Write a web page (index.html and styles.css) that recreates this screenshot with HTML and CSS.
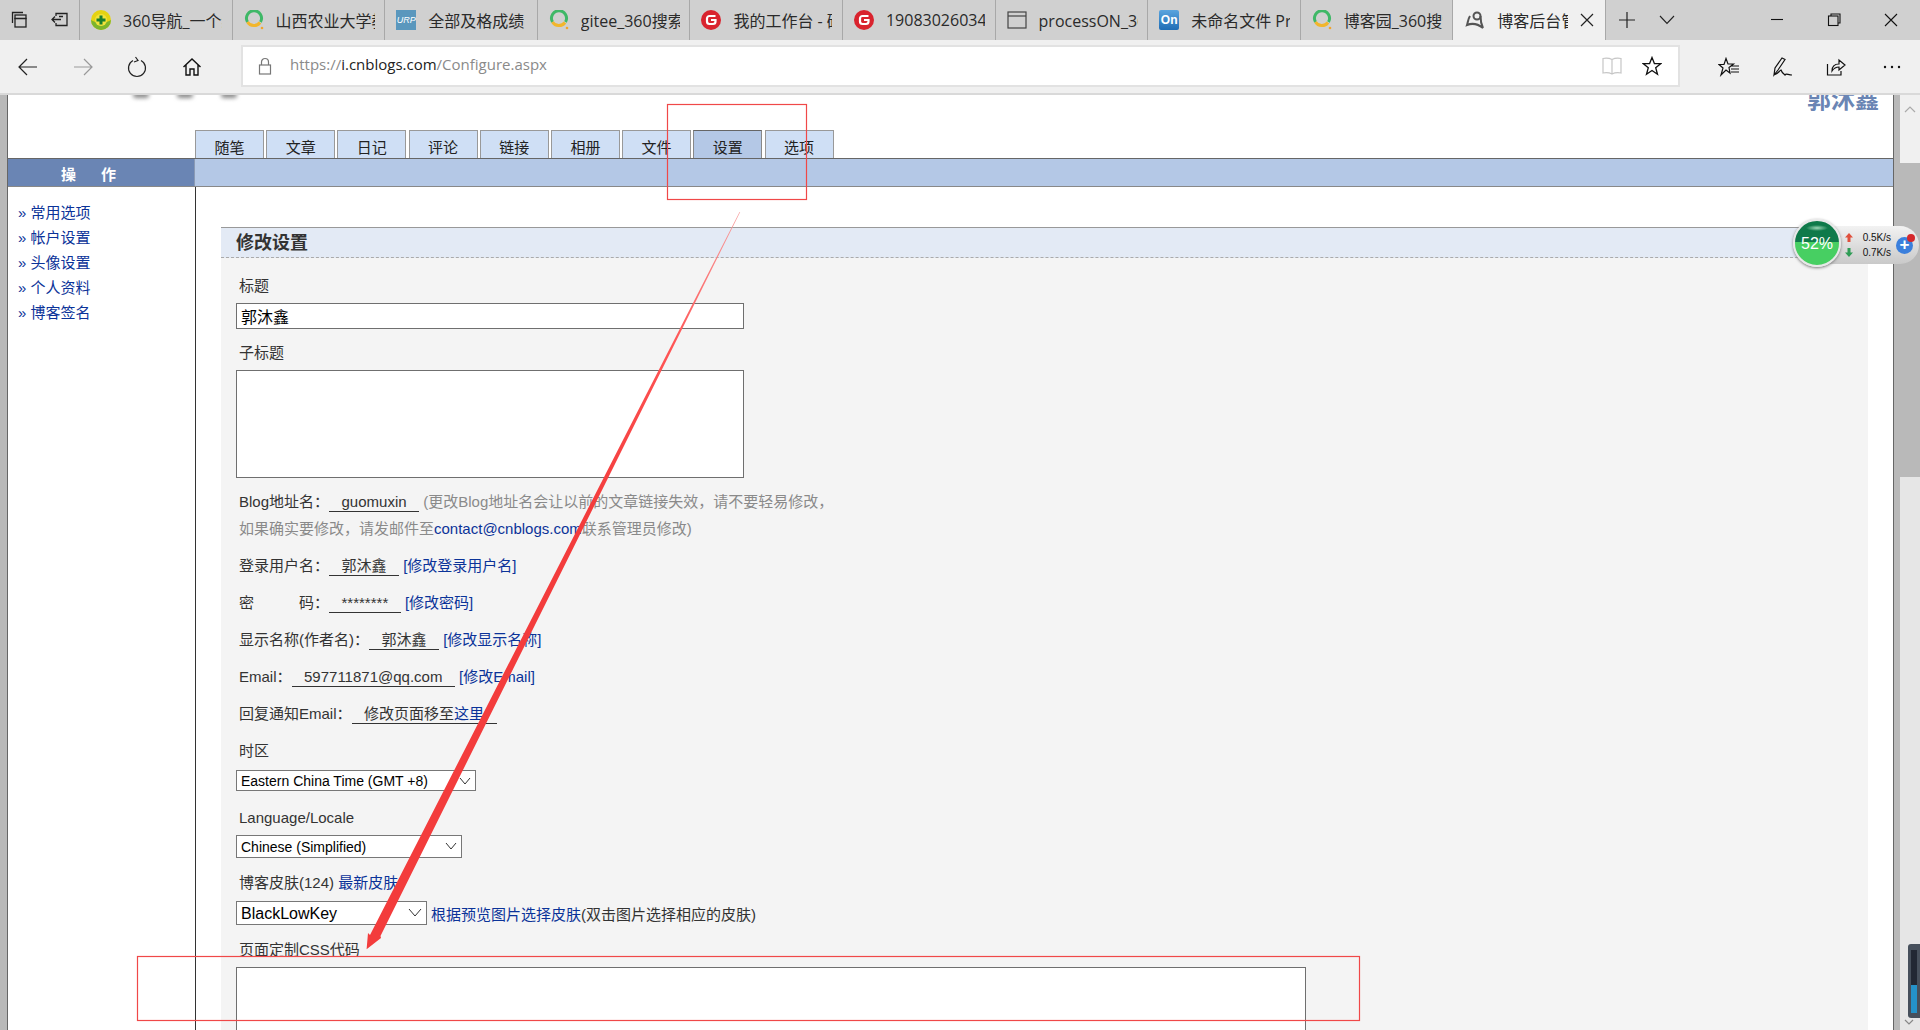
FILE: index.html
```html
<!DOCTYPE html>
<html lang="zh-CN">
<head>
<meta charset="UTF-8">
<title>博客后台管理</title>
<link rel="stylesheet" href="styles.css">
</head>
<body>
<svg class="defs" width="0" height="0">
  <symbol id="ico-search" viewBox="0 0 20 20">
    <path d="M3.5 12A7.5 7.5 0 1 1 16.5 12" fill="none" stroke="#3fb867" stroke-width="3"/>
    <path d="M3.5 12A7.5 7.5 0 0 0 16 12.5" fill="none" stroke="#f2b62c" stroke-width="3"/>
    <circle cx="18" cy="18" r="1.3" fill="#f2a52c"/>
  </symbol>
  <symbol id="ico-gitee" viewBox="0 0 20 20">
    <circle cx="10" cy="10" r="10" fill="#d9232e"/>
    <path d="M14.5 6H8.5A2.5 2.5 0 0 0 6 8.500V11.500A2.500 2.500 0 0 0 8.500 14H12A2.500 2.500 0 0 0 14.500 11.500V10H10" fill="none" stroke="#fff" stroke-width="2.200"/>
  </symbol>
</svg>

<div class="browser">
  <div class="tabstrip">
    <div class="strip-tools">
      <svg width="20" height="20" viewBox="0 0 20 20" fill="none" stroke="#222" stroke-width="1.300"><path d="M2.500 13V2.500H13"/><rect x="5" y="5" width="11" height="3.500"/><rect x="5" y="8.500" width="11" height="8.500"/></svg>
      <svg width="20" height="20" viewBox="0 0 20 20" fill="none" stroke="#222" stroke-width="1.300"><path d="M6 6V3.500H17V15.500H6V13"/><path d="M2 9.500H11M5 6.500L2 9.500L5 12.500M9 6.500H13"/></svg>
    </div>
    <div class="tab">
      <svg class="tab-ico" viewBox="0 0 20 20"><circle cx="10" cy="10" r="10" fill="#e5d312"/><path d="M0 10A10 10 0 0 0 20 10A12 6 0 0 1 0 10" fill="#7db52b"/><circle cx="10" cy="10" r="6" fill="#f3e33b"/><path d="M10 5.500V14.500M5.500 10H14.500" stroke="#1b7f2d" stroke-width="3"/></svg>
      <span class="tab-title">360导航_一个绿色安全的上网导航</span>
    </div>
    <div class="tab">
      <svg class="tab-ico"><use href="#ico-search"/></svg>
      <span class="tab-title">山西农业大学教务系统</span>
    </div>
    <div class="tab">
      <span class="tab-ico urp">URP</span>
      <span class="tab-title">全部及格成绩</span>
    </div>
    <div class="tab">
      <svg class="tab-ico"><use href="#ico-search"/></svg>
      <span class="tab-title">gitee_360搜索</span>
    </div>
    <div class="tab">
      <svg class="tab-ico"><use href="#ico-gitee"/></svg>
      <span class="tab-title">我的工作台 - 码云</span>
    </div>
    <div class="tab">
      <svg class="tab-ico"><use href="#ico-gitee"/></svg>
      <span class="tab-title">1908302603456</span>
    </div>
    <div class="tab">
      <svg class="tab-ico" viewBox="0 0 20 20" fill="none" stroke="#444" stroke-width="1.200"><rect x="1" y="2" width="18" height="16"/><path d="M1 6H19"/></svg>
      <span class="tab-title">processON_360搜索</span>
    </div>
    <div class="tab">
      <span class="tab-ico on">On</span>
      <span class="tab-title">未命名文件 ProcessOn</span>
    </div>
    <div class="tab">
      <svg class="tab-ico"><use href="#ico-search"/></svg>
      <span class="tab-title">博客园_360搜索</span>
    </div>
    <div class="tab tab-active">
      <svg class="tab-ico" viewBox="0 0 20 20" fill="none" stroke="#555" stroke-width="2"><circle cx="12" cy="6" r="3.500"/><path d="M15.500 6C15.500 11 16.500 15 18 18C13 14 7 13 2 15C3 12 3 9 5 6"/></svg>
      <span class="tab-title">博客后台管理</span>
      <svg class="tab-close" width="14" height="14" viewBox="0 0 14 14" stroke="#222" stroke-width="1.200"><path d="M1 1L13 13M13 1L1 13"/></svg>
    </div>
    <div class="strip-actions">
      <svg width="18" height="18" viewBox="0 0 18 18" stroke="#222" stroke-width="1.200"><path d="M9 1V17M1 9H17"/></svg>
      <svg width="16" height="10" viewBox="0 0 16 10" fill="none" stroke="#222" stroke-width="1.100"><path d="M1 1L8 8.500L15 1"/></svg>
    </div>
    <div class="win-buttons">
      <svg width="14" height="14" viewBox="0 0 14 14" stroke="#111" stroke-width="1.100"><path d="M1 6.500H13"/></svg>
      <svg width="14" height="14" viewBox="0 0 14 14" fill="none" stroke="#111" stroke-width="1.100"><rect x="1.500" y="3" width="9.500" height="9.500"/><path d="M4 3V1H13V10H11"/></svg>
      <svg width="14" height="14" viewBox="0 0 14 14" stroke="#111" stroke-width="1.100"><path d="M1 1L13 13M13 1L1 13"/></svg>
    </div>
  </div>

  <div class="toolbar">
    <div class="nav-buttons">
      <svg width="22" height="20" viewBox="0 0 22 20" fill="none" stroke="#222" stroke-width="1.200"><path d="M20 10H2M10 2L2 10L10 18"/></svg>
      <svg width="22" height="20" viewBox="0 0 22 20" fill="none" stroke="#999" stroke-width="1.200"><path d="M2 10H20M12 2L20 10L12 18"/></svg>
      <svg width="20" height="22" viewBox="0 0 20 22" fill="none" stroke="#222" stroke-width="1.200"><path d="M6 4.500A8.500 8.500 0 1 0 14 4.500M8.500 1L11 4.500L7 6"/></svg>
      <svg class="home" width="20" height="20" viewBox="0 0 20 20" fill="none" stroke="#111" stroke-width="1.400"><path d="M1.500 10L10 2L18.500 10M4 8V18H8V12H12V18H16V8"/></svg>
    </div>
    <div class="address">
      <svg class="lock" width="14" height="18" viewBox="0 0 14 18" fill="none" stroke="#777" stroke-width="1.200"><rect x="1.500" y="8" width="11" height="9"/><path d="M3.500 8V5A3.500 3.500 0 0 1 10.500 5V8"/></svg>
      <span class="url">https://<b>i.cnblogs.com</b>/Configure.aspx</span>
      <svg class="book" width="20" height="18" viewBox="0 0 20 18" fill="none" stroke="#c6c6c6" stroke-width="1.200"><path d="M10 2.500V17M10 2.500C7 1 4 1 1 1.500V16C4 15.500 7 15.500 10 17C13 15.500 16 15.500 19 16V1.500C16 1 13 1 10 2.500"/></svg>
      <svg class="star" width="20" height="20" viewBox="0 0 20 20" fill="none" stroke="#111" stroke-width="1.300"><path d="M10 1.500L12.400 7.600H18.900L13.700 11.700L15.500 18.300L10 14.500L4.500 18.300L6.300 11.700L1.100 7.600H7.600Z"/></svg>
    </div>
    <div class="hub-buttons">
      <svg width="22" height="20" viewBox="0 0 22 20" fill="none" stroke="#111" stroke-width="1.200"><path d="M8 1.500L10 7H15.500L11 10.500L12 16L8 13L3 18L5 11L1 7.500H6ZM13 9H21M13 12H21M13 15H21"/></svg>
      <svg width="20" height="22" viewBox="0 0 20 22" fill="none" stroke="#111" stroke-width="1.200"><path d="M1 19L2 12L9 2L12 3.500L5 14ZM1 19C5 18 6 15 8 14C9 17 11 18 12 19C13 17 15 19 19 19"/></svg>
      <svg width="20" height="20" viewBox="0 0 20 20" fill="none" stroke="#111" stroke-width="1.200"><path d="M1.500 7V18H15V14M6 14C6 9 9 7 13 7V3L19 8L13 13V10C10 10 8 11 6 14Z"/></svg>
      <svg class="more" width="18" height="4" viewBox="0 0 18 4" fill="#111"><circle cx="2" cy="2" r="1.200"/><circle cx="9" cy="2" r="1.200"/><circle cx="16" cy="2" r="1.200"/></svg>
    </div>
  </div>

  <div class="viewport">
    <div class="gutter"></div>
    <div class="page">
      <div class="page-head">
        <div class="smudges"><i></i><i></i><i></i></div>
        <div class="blog-name">郭沐鑫</div>
        <ul class="tabs">
          <li>随笔</li>
          <li>文章</li>
          <li>日记</li>
          <li>评论</li>
          <li>链接</li>
          <li>相册</li>
          <li>文件</li>
          <li class="current">设置</li>
          <li>选项</li>
        </ul>
      </div>
      <div class="navbar">
        <div class="navbar-title">操作</div>
      </div>
      <div class="main">
        <div class="sidebar">
          <a href="#">» 常用选项</a>
          <a href="#">» 帐户设置</a>
          <a href="#">» 头像设置</a>
          <a href="#">» 个人资料</a>
          <a href="#">» 博客签名</a>
        </div>
        <div class="content">
          <div class="panel">
            <h2 class="panel-title">修改设置</h2>
            <div class="form">
              <div class="label first">标题</div>
              <input class="text-input" type="text" value="郭沐鑫">
              <div class="label after-input">子标题</div>
              <textarea class="subtitle-box"></textarea>

              <div class="row row-blog">Blog地址名：<span class="value">guomuxin</span> <span class="note">(更改Blog地址名会让以前的文章链接失效，请不要轻易修改，</span></div>
              <div class="row row-note"><span class="note">如果确实要修改，请发邮件至<a href="#">contact@cnblogs.com</a>联系管理员修改)</span></div>
              <div class="row">登录用户名：<span class="value">郭沐鑫</span> <a href="#">[修改登录用户名]</a></div>
              <div class="row">密&emsp;&emsp;&emsp;码：<span class="value">********</span> <a href="#">[修改密码]</a></div>
              <div class="row">显示名称(作者名)：<span class="value">郭沐鑫</span> <a href="#">[修改显示名称]</a></div>
              <div class="row">Email：<span class="value">597711871@qq.com</span> <a href="#">[修改Email]</a></div>
              <div class="row">回复通知Email：<span class="value">修改页面移至<a href="#">这里</a></span></div>

              <div class="label after-rows">时区</div>
              <div class="select-wrap zone">
                <select><option>Eastern China Time (GMT +8)</option></select>
                <svg width="12" height="8" viewBox="0 0 12 8" fill="none" stroke="#333"><path d="M1 1L6 7L11 1"/></svg>
              </div>
              <div class="label after-zone">Language/Locale</div>
              <div class="select-wrap locale">
                <select><option>Chinese (Simplified)</option></select>
                <svg width="12" height="8" viewBox="0 0 12 8" fill="none" stroke="#333"><path d="M1 1L6 7L11 1"/></svg>
              </div>
              <div class="label after-locale">博客皮肤(124) <a href="#">最新皮肤</a></div>
              <div class="skin-row">
                <div class="select-wrap skin">
                  <select><option>BlackLowKey</option></select>
                  <svg width="14" height="9" viewBox="0 0 14 9" fill="none" stroke="#333"><path d="M1 1L7 8L13 1"/></svg>
                </div>
                <span class="skin-hint"><a href="#">根据预览图片选择皮肤</a>(双击图片选择相应的皮肤)</span>
              </div>
              <div class="label after-skin">页面定制CSS代码</div>
              <textarea class="css-box"></textarea>
            </div>
          </div>
        </div>
      </div>
    </div>
    <div class="scrollbar">
      <div class="scroll-up">
        <svg width="12" height="7" viewBox="0 0 12 7" fill="none" stroke="#aaa" stroke-width="1.200"><path d="M1 6L6 1L11 6"/></svg>
      </div>
      <div class="scroll-thumb"></div>
      <div class="scroll-track">
        <div class="meter"><i></i></div>
        <svg width="10" height="6" viewBox="0 0 10 6" fill="none" stroke="#888" stroke-width="1.200"><path d="M1 1L5 5L9 1"/></svg>
      </div>
    </div>
  </div>

  <!-- screenshot annotations, drawn over the page -->
  <svg class="notes" width="1920" height="1030" viewBox="0 0 1920 1030">
    <defs>
      <linearGradient id="fade" x1="0" y1="212" x2="0" y2="949" gradientUnits="userSpaceOnUse">
        <stop offset="0" stop-color="#f7a0a0"/>
        <stop offset="0.18" stop-color="#f55"/>
        <stop offset="0.4" stop-color="#f33c3c"/>
      </linearGradient>
    </defs>
    <rect x="667.500" y="104.500" width="139" height="95" fill="none" stroke="#f04848" stroke-width="1.200"/>
    <rect x="137.500" y="956.500" width="1222" height="64" fill="none" stroke="#f04848" stroke-width="1.200"/>
    <polygon points="739.500,212 740.200,212 380.500,936 381,938 366.600,949.300 368,933 370,935" fill="url(#fade)"/>
  </svg>

  <div class="netspeed">
    <div class="bubble"><span>52%</span></div>
    <div class="rates">
      <div class="rate">
        <svg width="8" height="9" viewBox="0 0 8 9" fill="#e0503c"><path d="M4 0L8 4.500H5.500V9H2.500V4.500H0Z"/></svg>
        <span>0.5K/s</span>
      </div>
      <div class="rate">
        <svg width="8" height="9" viewBox="0 0 8 9" fill="#2f9c55"><path d="M4 9L8 4.500H5.500V0H2.500V4.500H0Z"/></svg>
        <span>0.7K/s</span>
      </div>
    </div>
    <div class="boost">+<i></i></div>
  </div>
</div>
</body>
</html>
```

FILE: styles.css
```css
* {
  box-sizing: border-box;
}

body {
  margin: 0;
  font-family: "Liberation Sans", "Noto Sans CJK SC", sans-serif;
  font-size: 15px;
  color: #333;
  overflow: hidden;
}

a {
  color: #0b3399;
  text-decoration: none;
}

.defs {
  position: absolute;
}

.browser {
  position: relative;
  display: flex;
  flex-direction: column;
  width: 1920px;
  height: 1030px;
  overflow: hidden;
  background: #fff;
}

/* tab strip */
.tabstrip {
  display: flex;
  height: 40px;
  flex-shrink: 0;
  background: #d0d0d0;
  align-items: stretch;
}

.strip-tools {
  display: flex;
  width: 80px;
  padding-left: 10px;
  gap: 20px;
  align-items: center;
  border-right: 1px solid #a8a8a8;
}

.tab {
  display: flex;
  width: 152.600px;
  padding-left: 11px;
  align-items: center;
  border-right: 1px solid #a8a8a8;
  flex-shrink: 0;
}

.tab-ico {
  width: 20px;
  height: 20px;
  margin-right: 12px;
  flex-shrink: 0;
}

.urp {
  background: #5a97bd;
  color: #fff;
  font-size: 9px;
  font-style: italic;
  line-height: 20px;
  text-align: center;
}

.on {
  background: linear-gradient(#5aa4de, #1f6db5);
  color: #fff;
  font-size: 12px;
  font-weight: bold;
  line-height: 20px;
  text-align: center;
  border-radius: 2px;
}

.tab-title {
  width: 99px;
  overflow: hidden;
  white-space: nowrap;
  font-family: "Open Sans", "Noto Sans CJK SC", sans-serif;
  font-size: 16px;
  color: #2a2a2a;
}

.tab-active {
  background: #f0f0f0;
  padding-left: 12px;
}

.tab-active .tab-title {
  width: 71px;
}

.tab-close {
  margin-left: 12px;
}

.strip-actions {
  display: flex;
  width: 105px;
  padding-left: 12px;
  gap: 23px;
  align-items: center;
}

.win-buttons {
  display: flex;
  margin-left: auto;
  padding-right: 22px;
  gap: 43px;
  align-items: center;
}

/* address bar */
.toolbar {
  display: flex;
  height: 55px;
  flex-shrink: 0;
  background: #f0f0f0;
  border-bottom: 2px solid #d9d9d9;
  align-items: center;
}

.nav-buttons {
  display: flex;
  width: 241px;
  padding-left: 17px;
  gap: 33px;
  align-items: center;
}

.home {
  margin-left: 2px;
}

.address {
  display: flex;
  width: 1439px;
  height: 42px;
  margin-top: -2px;
  background: #fff;
  border: 2px solid #e2e2e2;
  align-items: center;
}

.lock {
  margin-left: 15px;
}

.url {
  margin: -3px 0 0 18px;
  font-family: "Open Sans", sans-serif;
  font-size: 15px;
  color: #8a8a8a;
}

.url b {
  font-weight: normal;
  color: #222;
}

.book {
  margin-left: auto;
}

.star {
  margin: 0 16px 0 20px;
}

.hub-buttons {
  display: flex;
  margin-left: 38px;
  gap: 33px;
  align-items: center;
}

.more {
  margin-left: 4px;
}

/* page */
.viewport {
  display: flex;
  flex: 1;
  min-height: 0;
}

.gutter {
  width: 8px;
  background: #b9b9b9;
  border-right: 1px solid #666;
  flex-shrink: 0;
}

.page {
  flex: 1;
  display: flex;
  flex-direction: column;
  min-width: 0;
  background: #fff;
  border-right: 1px solid #666;
}

.page-head {
  position: relative;
  display: flex;
  height: 63px;
  flex-shrink: 0;
  padding-left: 187px;
  align-items: flex-end;
  overflow: hidden;
}

.smudges {
  position: absolute;
  left: 125px;
  top: -3px;
  display: flex;
  gap: 28px;
}

.smudges i {
  width: 16px;
  height: 6px;
  border-radius: 3px;
  background: #888;
  filter: blur(2px);
}

.blog-name {
  position: absolute;
  right: 14px;
  top: -15px;
  font-size: 24px;
  font-weight: bold;
  color: #6a85b4;
}

.tabs {
  display: flex;
  margin: 0;
  padding: 0;
  gap: 2.200px;
  list-style: none;
}

.tabs li {
  width: 69px;
  height: 28px;
  background: #cfdff5;
  border: 1px solid #999;
  border-bottom: none;
  color: #222;
  line-height: 33px;
  text-align: center;
}

.tabs .current {
  position: relative;
  z-index: 1;
  height: 30px;
  margin-bottom: -2px;
  background: #b4c8e6;
  border-color: #888;
  border-top-color: #666;
}

.navbar {
  height: 29px;
  flex-shrink: 0;
  background: #b4c8e6;
  border-top: 1px solid #666;
  border-bottom: 1px solid #888;
}

.navbar-title {
  width: 187px;
  height: 27px;
  padding-left: 53px;
  background: #6a85b4;
  color: #fff;
  font-weight: bold;
  line-height: 31px;
  letter-spacing: 25px;
  border-right: 1px solid #8a9ab5;
}

.main {
  display: flex;
  flex: 1;
  min-height: 0;
}

.sidebar {
  display: flex;
  flex-direction: column;
  width: 188px;
  padding: 13px 0 0 10px;
  border-right: 1px solid #333;
  flex-shrink: 0;
}

.sidebar a {
  line-height: 25px;
  height: 25px;
}

.content {
  flex: 1;
  min-width: 0;
  padding: 40px 25px 0;
}

.panel {
  height: 100%;
  background: #f4f4f4;
}

.panel-title {
  height: 31px;
  margin: 0;
  padding-left: 15px;
  background: #e3eaf5;
  border-top: 1px solid #999;
  border-bottom: 1px dashed #aaa;
  font-size: 18px;
  line-height: 31px;
  color: #333;
}

.form {
  padding-left: 15px;
}

.label,
.row {
  height: 20px;
  padding-left: 3px;
  line-height: 20px;
  white-space: nowrap;
}

.label.first {
  margin-top: 18px;
  margin-bottom: 7px;
}

.label.after-input {
  margin-top: 14px;
  margin-bottom: 7px;
}

.text-input {
  display: block;
  width: 508px;
  height: 26px;
  padding: 0 4px;
  background: #fff;
  border: 1px solid #6f6f6f;
  border-radius: 0;
  font-family: inherit;
  font-size: 16px;
  color: #000;
  outline: none;
}

.subtitle-box,
.css-box {
  display: block;
  background: #fff;
  border: 1px solid #6f6f6f;
  border-radius: 0;
  resize: none;
  outline: none;
}

.subtitle-box {
  width: 508px;
  height: 108px;
}

.css-box {
  width: 1070px;
  height: 200px;
}

.row {
  margin-top: 17px;
}

.row-blog {
  margin-top: 14px;
}

.row-note {
  margin-top: 7px;
}

.value {
  display: inline-block;
  height: 20px;
  padding: 0 12.500px;
  border-bottom: 1px solid #333;
  line-height: 19px;
}

.note {
  color: #8a8a8a;
}

.label.after-rows {
  margin-top: 17px;
  margin-bottom: 9px;
}

.label.after-zone {
  margin-top: 17px;
  margin-bottom: 7px;
}

.label.after-locale {
  margin-top: 15px;
  margin-bottom: 8px;
}

.label.after-skin {
  margin-top: 15px;
  margin-bottom: 7px;
}

.select-wrap {
  position: relative;
  display: block;
}

.select-wrap select {
  display: block;
  width: 100%;
  height: 100%;
  padding: 0 0 0 4px;
  background: #fff;
  border: 1px solid #777;
  border-radius: 0;
  appearance: none;
  font-family: inherit;
  font-size: 14px;
  color: #000;
  outline: none;
}

.select-wrap svg {
  position: absolute;
  right: 5px;
  top: 7px;
}

.zone {
  width: 240px;
  height: 21px;
}

.locale {
  width: 226px;
  height: 23px;
}

.skin {
  width: 191px;
  height: 24px;
  flex-shrink: 0;
}

.skin select {
  font-size: 16px;
}

.skin-row {
  display: flex;
  align-items: center;
  gap: 4px;
}

.skin-hint {
  white-space: nowrap;
  font-size: 15px;
}

/* scrollbar */
.scrollbar {
  display: flex;
  flex-direction: column;
  width: 26px;
  flex-shrink: 0;
  background: #b9b9b9;
  padding-left: 6px;
}

.scroll-up {
  display: flex;
  height: 68px;
  background: #f0f0f0;
  justify-content: center;
  padding-top: 11px;
}

.scroll-up svg {
  display: block;
}

.scroll-thumb {
  height: 314px;
}

.scroll-track {
  position: relative;
  flex: 1;
  background: #e6e6e6;
}

.scroll-track svg {
  position: absolute;
  left: 4px;
  bottom: 5px;
}

.meter {
  position: absolute;
  right: 0;
  top: 467px;
  width: 12px;
  height: 74px;
  padding: 6px 3px 5px;
  background: #47505c;
  border-radius: 3px 0 0 3px;
}

.meter i {
  display: block;
  height: 100%;
  background: linear-gradient(#222834 0 55%, #2492c9 55%);
}

/* annotations and the floating speed widget */
.notes {
  position: absolute;
  left: 0;
  top: 0;
  pointer-events: none;
}

.netspeed {
  position: absolute;
  left: 1793px;
  top: 219px;
  width: 127px;
  height: 48px;
}

.netspeed::before {
  content: "";
  position: absolute;
  left: 24px;
  right: 1px;
  top: 7px;
  height: 38px;
  background: linear-gradient(#f2f2f2, #c9c9c9);
  border-radius: 0 19px 19px 0;
}

.bubble {
  position: absolute;
  left: 0;
  top: 0;
  width: 48px;
  height: 48px;
  background: radial-gradient(ellipse 11px 3px at 50% 7px, #9fd8b8, transparent), linear-gradient(#0f7a4a 0 47%, #47cf62 47%);
  border: 2px solid #e8e8e8;
  border-radius: 50%;
  box-shadow: 0 1px 3px #777;
  color: #fff;
  font-size: 16px;
  line-height: 46px;
  text-align: center;
}

.rates {
  position: absolute;
  left: 52px;
  top: 11px;
  display: flex;
  flex-direction: column;
  width: 46px;
  gap: 1px;
  font-size: 10px;
  color: #111;
}

.rate {
  display: flex;
  height: 14px;
  align-items: center;
  justify-content: space-between;
}

.boost {
  position: absolute;
  left: 103px;
  top: 18px;
  width: 17px;
  height: 17px;
  background: #3b7fdc;
  border-radius: 50%;
  color: #fff;
  font-size: 17px;
  font-weight: bold;
  line-height: 16px;
  text-align: center;
}

.boost i {
  position: absolute;
  right: -2px;
  top: -3px;
  width: 8px;
  height: 8px;
  background: #d5282c;
  border-radius: 50%;
}
```
